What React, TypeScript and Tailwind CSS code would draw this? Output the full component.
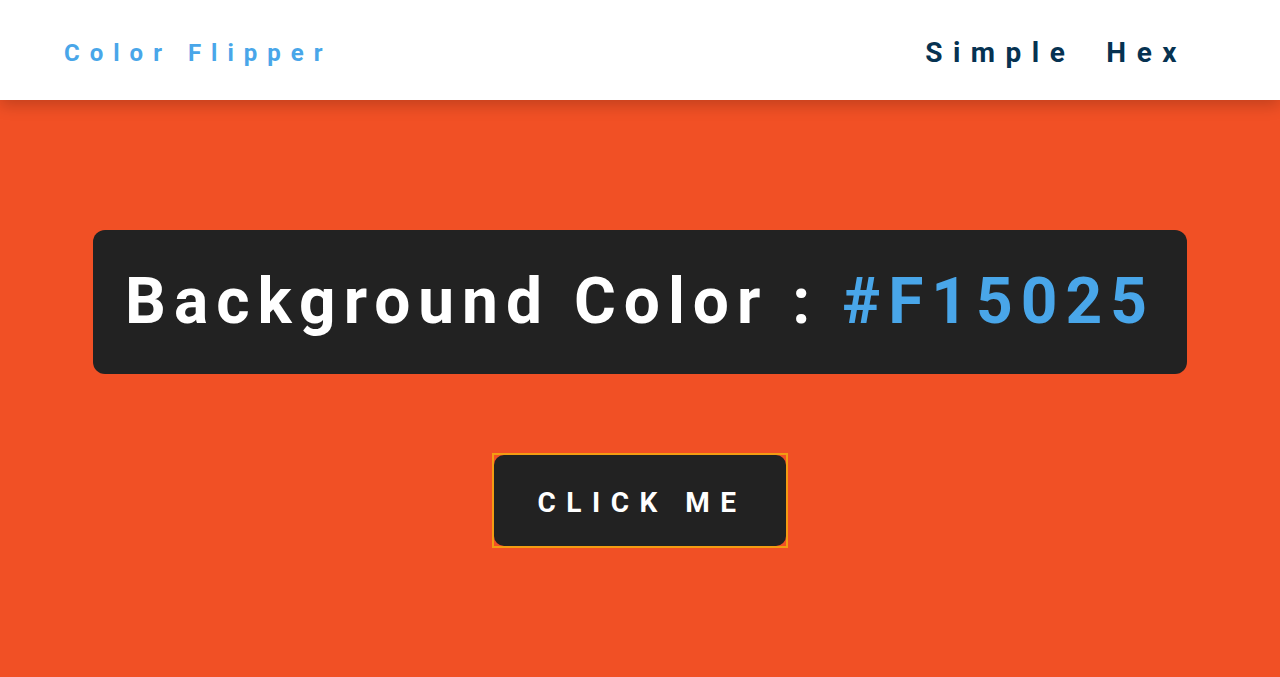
import React from 'react';

const hex = '#F15025';

export default function App() {
  return (
    <div className="min-h-[677px] bg-[#f15025] font-['Roboto',sans-serif]">
      <nav className="relative z-10 h-[100px] bg-white shadow-[0_5px_15px_rgba(0,0,0,0.2)]">
        <div className="flex h-full items-center justify-between pt-[6px] pl-[64px] pr-[93px]">
          <h4 className="text-[24px] font-bold tracking-[10px] text-[#49a6e9]">Color Flipper</h4>
          <ul className="flex gap-[31px]">
            <li>
              <a href="#" className="text-[28px] font-bold tracking-[10.5px] text-[#063251]">Simple</a>
            </li>
            <li>
              <a href="#" className="text-[28px] font-bold tracking-[10.5px] text-[#063251]">Hex</a>
            </li>
          </ul>
        </div>
      </nav>

      <main className="flex h-[577px] flex-col items-center justify-center">
        <h2 className="rounded-xl bg-[#222222] p-8 text-[64px] font-bold leading-[80px] tracking-[8px] text-white">
          Background Color : <span className="text-[#49a6e9]">{hex}</span>
        </h2>
        <div className="mt-[79px] border-2 border-[#f39c12]">
          <button className="block h-[91px] w-[292px] rounded-[10px] bg-[#222222] pt-[5px] pl-[4px] text-[28px] font-bold tracking-[10.5px] text-white">
            CLICK ME
          </button>
        </div>
      </main>
    </div>
  );
}
